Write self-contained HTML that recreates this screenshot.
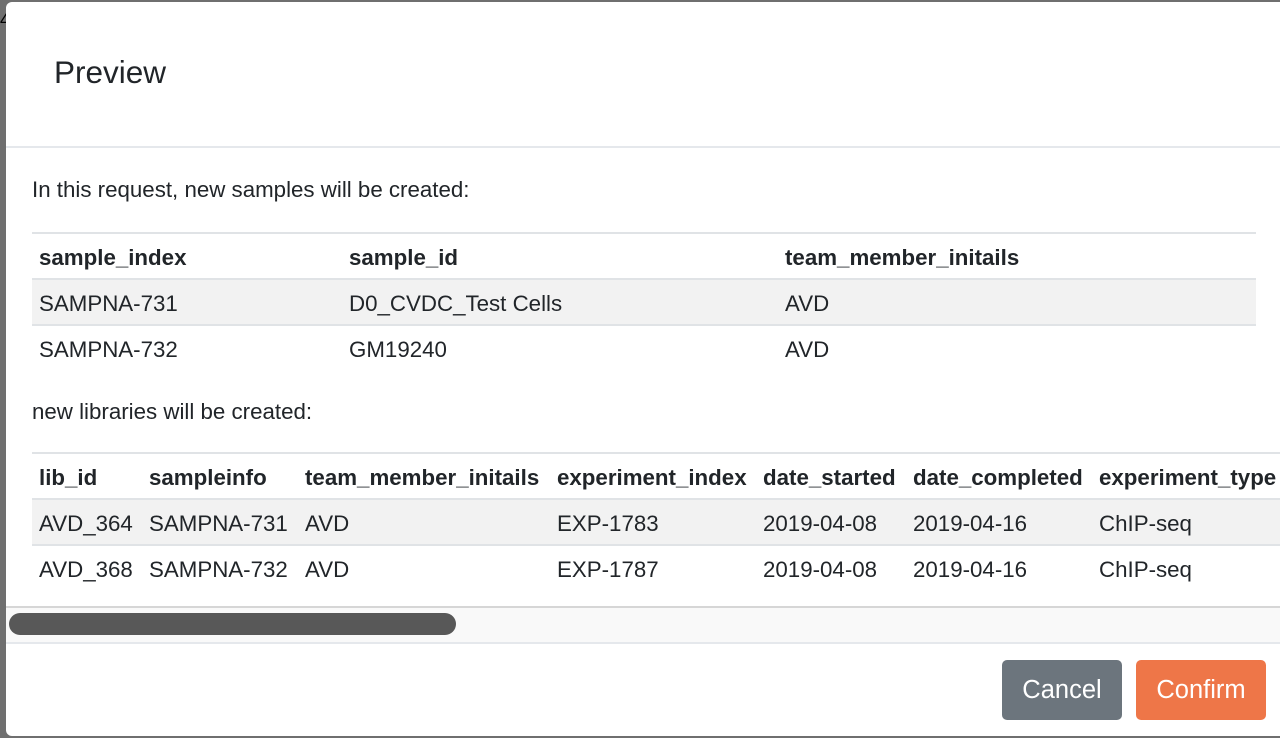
<!DOCTYPE html>
<html><head><style>
body{margin:0;width:1280px;height:738px;background:#6f6f6f;overflow:hidden;font-family:"Liberation Sans",sans-serif;color:#212529;position:relative}
.m{position:absolute;left:6px;top:2px;width:1290px;height:734px;background:#fff;border-radius:6px;overflow:hidden}
.a{position:absolute;white-space:nowrap}
.t{font-size:22.3px}
.b{font-weight:bold}
.line{position:absolute;height:2px;background:#e5e8ec}
.row{position:absolute;left:26px;height:45px;border-top:2px solid #e0e3e6}
.btn{position:absolute;top:658px;height:60px;border-radius:5px;color:#fff;font-size:25.5px;line-height:60px;text-align:center}
</style></head><body>
<div class="a" style="left:0;top:10px;font-size:18px;color:#000">4</div>
<div class="m">
<div class="a" style="left:48px;top:52px;font-size:31.5px">Preview</div>
<div class="line" style="left:0;top:144px;width:1290px"></div>
<div class="a t" style="left:26px;top:175px">In this request, new samples will be created:</div>
<div class="row" style="top:230px;width:1224px"></div>
<div class="row" style="top:276px;width:1224px;background:#f2f2f2"></div>
<div class="row" style="top:322px;width:1224px"></div>
<div class="a t b" style="left:33px;top:243px">sample_index</div>
<div class="a t b" style="left:343px;top:243px">sample_id</div>
<div class="a t b" style="left:779px;top:243px">team_member_initails</div>
<div class="a t" style="left:33px;top:289px">SAMPNA-731</div>
<div class="a t" style="left:343px;top:289px">D0_CVDC_Test Cells</div>
<div class="a t" style="left:779px;top:289px">AVD</div>
<div class="a t" style="left:33px;top:335px">SAMPNA-732</div>
<div class="a t" style="left:343px;top:335px">GM19240</div>
<div class="a t" style="left:779px;top:335px">AVD</div>
<div class="a t" style="left:26px;top:397px">new libraries will be created:</div>
<div class="row" style="top:450px;width:1264px"></div>
<div class="row" style="top:496px;width:1264px;background:#f2f2f2"></div>
<div class="row" style="top:542px;width:1264px"></div>
<div class="a t b" style="left:33px;top:463px">lib_id</div>
<div class="a t b" style="left:143px;top:463px">sampleinfo</div>
<div class="a t b" style="left:299px;top:463px">team_member_initails</div>
<div class="a t b" style="left:551px;top:463px">experiment_index</div>
<div class="a t b" style="left:757px;top:463px">date_started</div>
<div class="a t b" style="left:907px;top:463px">date_completed</div>
<div class="a t b" style="left:1093px;top:463px">experiment_type</div>
<div class="a t" style="left:33px;top:509px">AVD_364</div>
<div class="a t" style="left:143px;top:509px">SAMPNA-731</div>
<div class="a t" style="left:299px;top:509px">AVD</div>
<div class="a t" style="left:551px;top:509px">EXP-1783</div>
<div class="a t" style="left:757px;top:509px">2019-04-08</div>
<div class="a t" style="left:907px;top:509px">2019-04-16</div>
<div class="a t" style="left:1093px;top:509px">ChIP-seq</div>
<div class="a t" style="left:33px;top:555px">AVD_368</div>
<div class="a t" style="left:143px;top:555px">SAMPNA-732</div>
<div class="a t" style="left:299px;top:555px">AVD</div>
<div class="a t" style="left:551px;top:555px">EXP-1787</div>
<div class="a t" style="left:757px;top:555px">2019-04-08</div>
<div class="a t" style="left:907px;top:555px">2019-04-16</div>
<div class="a t" style="left:1093px;top:555px">ChIP-seq</div>
<div style="position:absolute;left:0;top:604px;width:1290px;height:34px;background:#f9f9f9;border-top:2px solid #d6d6d6"></div>
<div style="position:absolute;left:3px;top:611px;width:447px;height:22px;border-radius:11px;background:#585858"></div>
<div class="line" style="left:0;top:640px;width:1290px"></div>
<div class="btn" style="left:996px;width:120px;background:#6c757d">Cancel</div>
<div class="btn" style="left:1130px;width:130px;background:#ee7648">Confirm</div>
</div>
</body></html>
